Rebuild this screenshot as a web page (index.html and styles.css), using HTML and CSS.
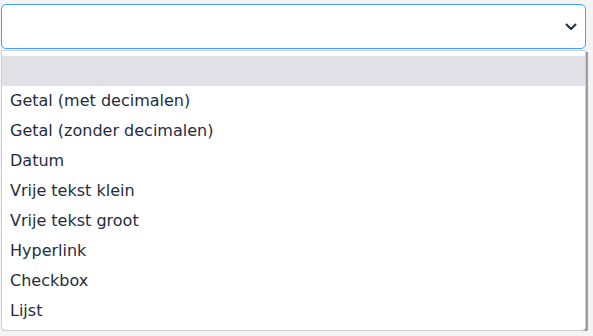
FILE: index.html
```html
<!DOCTYPE html>
<html lang="nl">
<head>
  <meta charset="UTF-8">
  <meta name="viewport" content="width=device-width, initial-scale=1.0">
  <title>Type veld</title>
  <link rel="stylesheet" href="styles.css">
</head>
<body>
  <div class="field">
    <div class="select">
      <svg class="chevron" width="12" height="8" viewBox="0 0 12 8">
        <path d="M1.5 1.5 L6 6 L10.5 1.5" fill="none" stroke="#1f2d3d" stroke-width="2" stroke-linecap="round" stroke-linejoin="round"/>
      </svg>
    </div>

    <ul class="options">
      <li class="selected">&nbsp;</li>
      <li>Getal (met decimalen)</li>
      <li>Getal (zonder decimalen)</li>
      <li>Datum</li>
      <li>Vrije tekst klein</li>
      <li>Vrije tekst groot</li>
      <li>Hyperlink</li>
      <li>Checkbox</li>
      <li>Lijst</li>
    </ul>
  </div>
</body>
</html>
```

FILE: styles.css
```css
/* algemeen */
body {
  margin: 0;
  padding: 4px 8px 0 1px;
  background-color: #f4f4f4;
  font-family: 'DejaVu Sans', Verdana, sans-serif;
  color: #1f2d3d;
}

.field {
  width: 585px;
}

.select {
  height: 45px;
  border: 1px solid #4d9fe0;
  border-radius: 5px;
  background-color: #ffffff;
  display: flex;
  align-items: center;
  justify-content: flex-end;
  padding-right: 8px;
  box-sizing: border-box;
}

.chevron {
  margin-top: 1px;
}

/* lijst met opties */
.options {
  list-style: none;
  margin: 1px 0 0 0;
  padding: 5px 0;
  background-color: #ffffff;
  border: 1px solid #d0d0d0;
  border-radius: 0 0 4px 4px;
  box-shadow: 2px 2px 1px #9a9a9a;
  box-sizing: border-box;
  height: 281px;
}

.options li {
  height: 30px;
  line-height: 30px;
  padding-left: 8px;
  font-size: 16px;
}

.options li.selected {
  background-color: #e1e0e6;
}
```
